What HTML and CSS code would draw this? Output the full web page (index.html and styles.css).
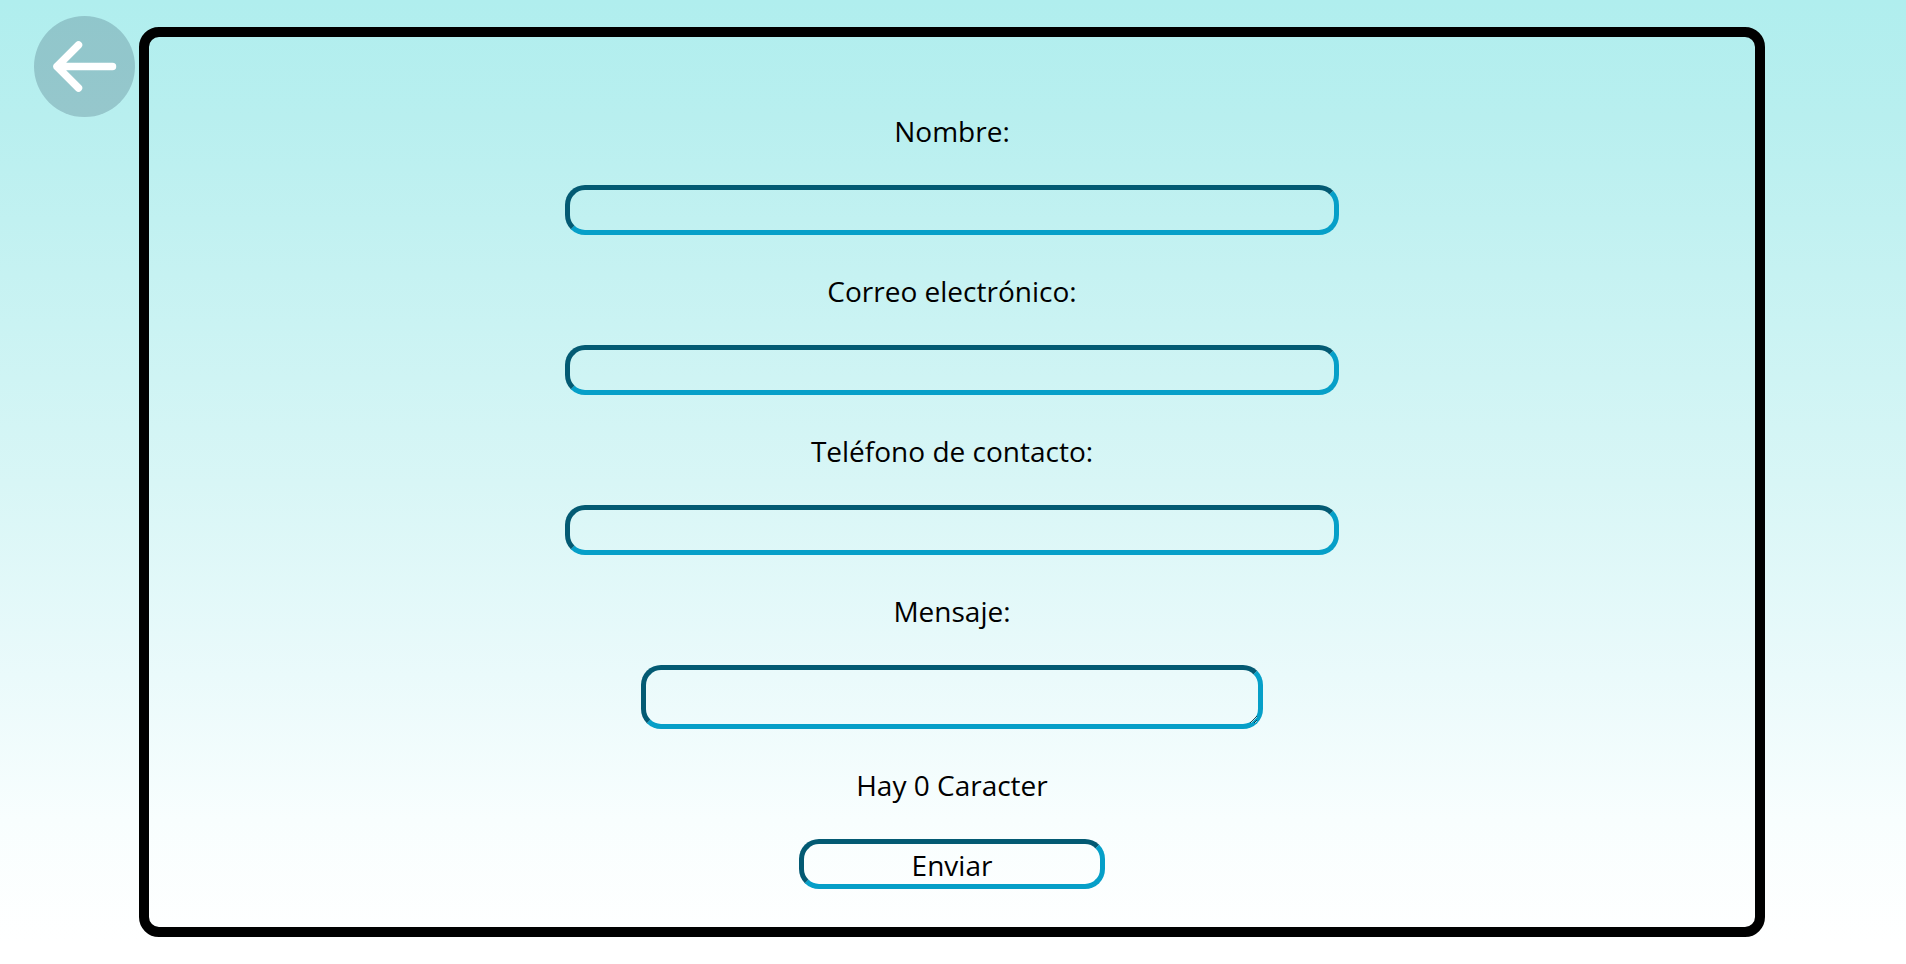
FILE: index.html
```html
<!DOCTYPE html>
<html lang="es">
<head>
  <meta charset="utf-8">
  <meta name="viewport" content="width=device-width, initial-scale=1">
  <title>Contacto</title>
  <link rel="stylesheet" href="styles.css">
</head>
<body>
  <div class="page">
    <a class="back" href="#" aria-label="Volver">
      <svg class="back-icon" viewBox="0 0 101 101" aria-hidden="true">
        <circle cx="50.5" cy="50.5" r="50.5" fill="#001830" fill-opacity="0.185"/>
        <path d="M78.500 50.500H23M44.500 29L23 50.500L44.500 72" fill="none" stroke="#fff" stroke-width="7.500" stroke-linecap="round" stroke-linejoin="round"/>
      </svg>
    </a>
    <main class="card">
      <form class="form">
        <label class="label" for="nombre">Nombre:</label>
        <input class="field" type="text" id="nombre">
        <label class="label" for="correo">Correo electrónico:</label>
        <input class="field" type="email" id="correo">
        <label class="label" for="telefono">Teléfono de contacto:</label>
        <input class="field" type="tel" id="telefono">
        <label class="label" for="mensaje">Mensaje:</label>
        <textarea class="field field-message" id="mensaje"></textarea>
        <p class="label">Hay 0 Caracter</p>
        <button class="field field-submit" type="submit">Enviar</button>
      </form>
    </main>
  </div>
</body>
</html>
```
FILE: styles.css
```css
* {
  box-sizing: border-box;
}

html {
  min-height: 100%;
  background: linear-gradient(#b0eeee 0%, #b8efef 12%, #d8f6f6 50%, #eafafb 70%, #f8fefe 85%, #ffffff 98%);
}

body {
  margin: 0;
  font-family: "Segoe UI", "Open Sans", "Noto Sans", sans-serif;
  font-size: 28px;
  line-height: 38px;
  color: #000;
}

.page {
  display: flex;
  align-items: flex-start;
  gap: 4px;
  padding: 16px 141px 27px 34px;
}

.back {
  flex: none;
  width: 101px;
}

.back-icon {
  display: block;
  width: 100%;
}

.card {
  flex: 1;
  margin-top: 11px;
  padding: 73px 0 38px;
  border: 10px solid #000;
  border-radius: 20px;
}

.form {
  display: flex;
  flex-direction: column;
  align-items: center;
  gap: 35px;
}

.label {
  margin: 0;
  padding-top: 2px;
}

.field {
  width: 48.2%;
  height: 50px;
  padding: 0 12px;
  border: 5px solid;
  border-color: #035a73 #069fc8 #069fc8 #035a73;
  border-radius: 20px;
  background: transparent;
  font: inherit;
  color: inherit;
}

.field-message {
  width: 38.7%;
  height: 64px;
}

.field-submit {
  width: 19%;
  padding-top: 2px;
}
```
